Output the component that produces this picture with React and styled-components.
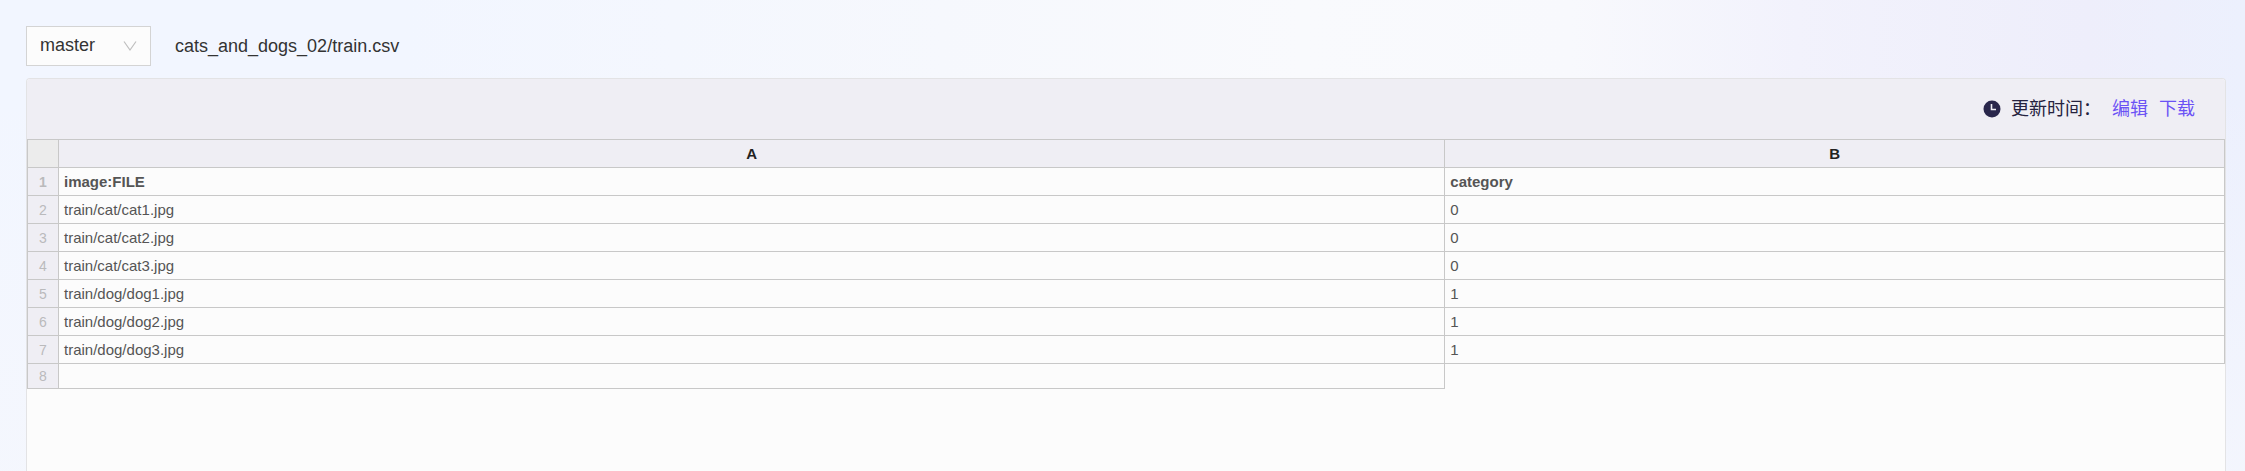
import React, { useState } from "react";
import styled, { createGlobalStyle } from "styled-components";

const GlobalStyle = createGlobalStyle`
  *, *::before, *::after { box-sizing: border-box; }
  html, body { margin: 0; padding: 0; }
  body {
    font-family: "Liberation Sans", "Noto Sans CJK SC", sans-serif;
    font-size: 18px;
    line-height: 24px;
    color: #333;
  }
`;

const Page = styled.main`
  display: flex;
  flex-direction: column;
  gap: 12px;
  min-height: 100vh;
  padding: 26px 19px 0 26px;
  background:
    linear-gradient(to bottom, rgba(245, 247, 253, 0) 20%, rgba(245, 247, 253, 0.8) 100%),
    linear-gradient(to right, #f2f6ff 0%, #f2f6ff 18%, #f6f8fd 42%, #f9fafd 58%, #f8f9fd 70%, #f2f2fc 80%, #eeeefb 93%, #ecf0fd 100%);
`;

const PathBar = styled.header`
  display: flex;
  align-items: center;
  gap: 24px;
`;

const SelectBox = styled.div`
  display: grid;
  align-items: center;
  width: 125px;
  height: 40px;

  > * { grid-area: 1 / 1; }
`;

const BranchSelect = styled.select`
  appearance: none;
  width: 100%;
  height: 100%;
  padding: 0 36px 2px 13px;
  border: 1px solid #d4d4d4;
  border-radius: 0;
  background: #fcfcfc;
  color: #333;
  font: inherit;
`;

const Chevron = styled.svg`
  justify-self: end;
  margin-right: 14px;
  pointer-events: none;
`;

const FilePath = styled.h1`
  margin: 0;
  font-size: 18px;
  font-weight: 400;
  line-height: 24px;
`;

const Panel = styled.section`
  flex: 1;
  border: 1px solid #e3e3e5;
  border-bottom: 0;
  border-radius: 4px 4px 0 0;
  background: #fcfcfc;
  overflow: hidden;
`;

const Toolbar = styled.div`
  display: flex;
  align-items: center;
  justify-content: flex-end;
  gap: 11px;
  height: 60px;
  padding-right: 30px;
  background: #efeef4;
`;

const UpdatedAt = styled.span`
  display: flex;
  align-items: center;
  gap: 10px;
  color: #25223f;
`;

const ActionLink = styled.a`
  color: #6b52f5;
  text-decoration: none;
`;

const Sheet = styled.table`
  width: 100%;
  border-collapse: collapse;
  table-layout: fixed;
  font-size: 15px;
  line-height: 20px;
  color: #555;
`;

const IndexCol = styled.col`
  width: 31px;
`;

const WideCol = styled.col`
  width: 63.1%;
`;

const Row = styled.tr`
  height: ${(p) => (p.$short ? 25 : 28)}px;
`;

const Cell = styled.td`
  padding: 0 5px;
  border: 1px solid #c8c8c8;
  text-align: left;
  font-weight: ${(p) => (p.$bold ? 700 : 400)};
`;

const ColumnHead = styled.th`
  padding: 0;
  border: 1px solid #c8c8c8;
  background: #efeef4;
  color: #222;
  text-align: center;
`;

const Corner = styled.td`
  padding: 0;
  border: 1px solid #c8c8c8;
  background: #ececec;
`;

const RowHead = styled.th`
  padding: 0;
  border: 1px solid #c8c8c8;
  background: #efeef4;
  color: #bababc;
  font-size: 14px;
  font-weight: ${(p) => (p.$bold ? 700 : 400)};
  text-align: center;
`;

const rows = [
  ["image:FILE", "category"],
  ["train/cat/cat1.jpg", "0"],
  ["train/cat/cat2.jpg", "0"],
  ["train/cat/cat3.jpg", "0"],
  ["train/dog/dog1.jpg", "1"],
  ["train/dog/dog2.jpg", "1"],
  ["train/dog/dog3.jpg", "1"],
  [""],
];

function ClockIcon() {
  return (
    <svg width="18" height="18" viewBox="0 0 18 18" aria-hidden="true">
      <circle cx="9" cy="9" r="8.5" fill="#29264b" />
      <path d="M8.5 4v5.5H13" fill="none" stroke="#efeef4" strokeWidth="1.6" />
    </svg>
  );
}

export default function App() {
  const [branch, setBranch] = useState("master");
  return (
    <>
      <GlobalStyle />
      <Page>
        <PathBar>
          <SelectBox>
            <BranchSelect
              aria-label="Branch"
              value={branch}
              onChange={(e) => setBranch(e.target.value)}
            >
              <option value="master">master</option>
            </BranchSelect>
            <Chevron width="14" height="12" viewBox="0 0 14 12" aria-hidden="true">
              <path d="M1 1.5l6 8.5 6-8.5" fill="none" stroke="#bfbfbf" strokeWidth="1.2" />
            </Chevron>
          </SelectBox>
          <FilePath>cats_and_dogs_02/train.csv</FilePath>
        </PathBar>
        <Panel>
          <Toolbar>
            <UpdatedAt>
              <ClockIcon />
              更新时间：
            </UpdatedAt>
            <ActionLink href="#edit">编辑</ActionLink>
            <ActionLink href="#download">下载</ActionLink>
          </Toolbar>
          <Sheet>
            <colgroup>
              <IndexCol />
              <WideCol />
              <col />
            </colgroup>
            <thead>
              <Row>
                <Corner />
                <ColumnHead scope="col">A</ColumnHead>
                <ColumnHead scope="col">B</ColumnHead>
              </Row>
            </thead>
            <tbody>
              {rows.map((cells, i) => (
                <Row key={i} $short={cells.length === 1}>
                  <RowHead scope="row" $bold={i === 0}>{i + 1}</RowHead>
                  {cells.map((text, j) => (
                    <Cell key={j} $bold={i === 0}>{text}</Cell>
                  ))}
                </Row>
              ))}
            </tbody>
          </Sheet>
        </Panel>
      </Page>
    </>
  );
}
